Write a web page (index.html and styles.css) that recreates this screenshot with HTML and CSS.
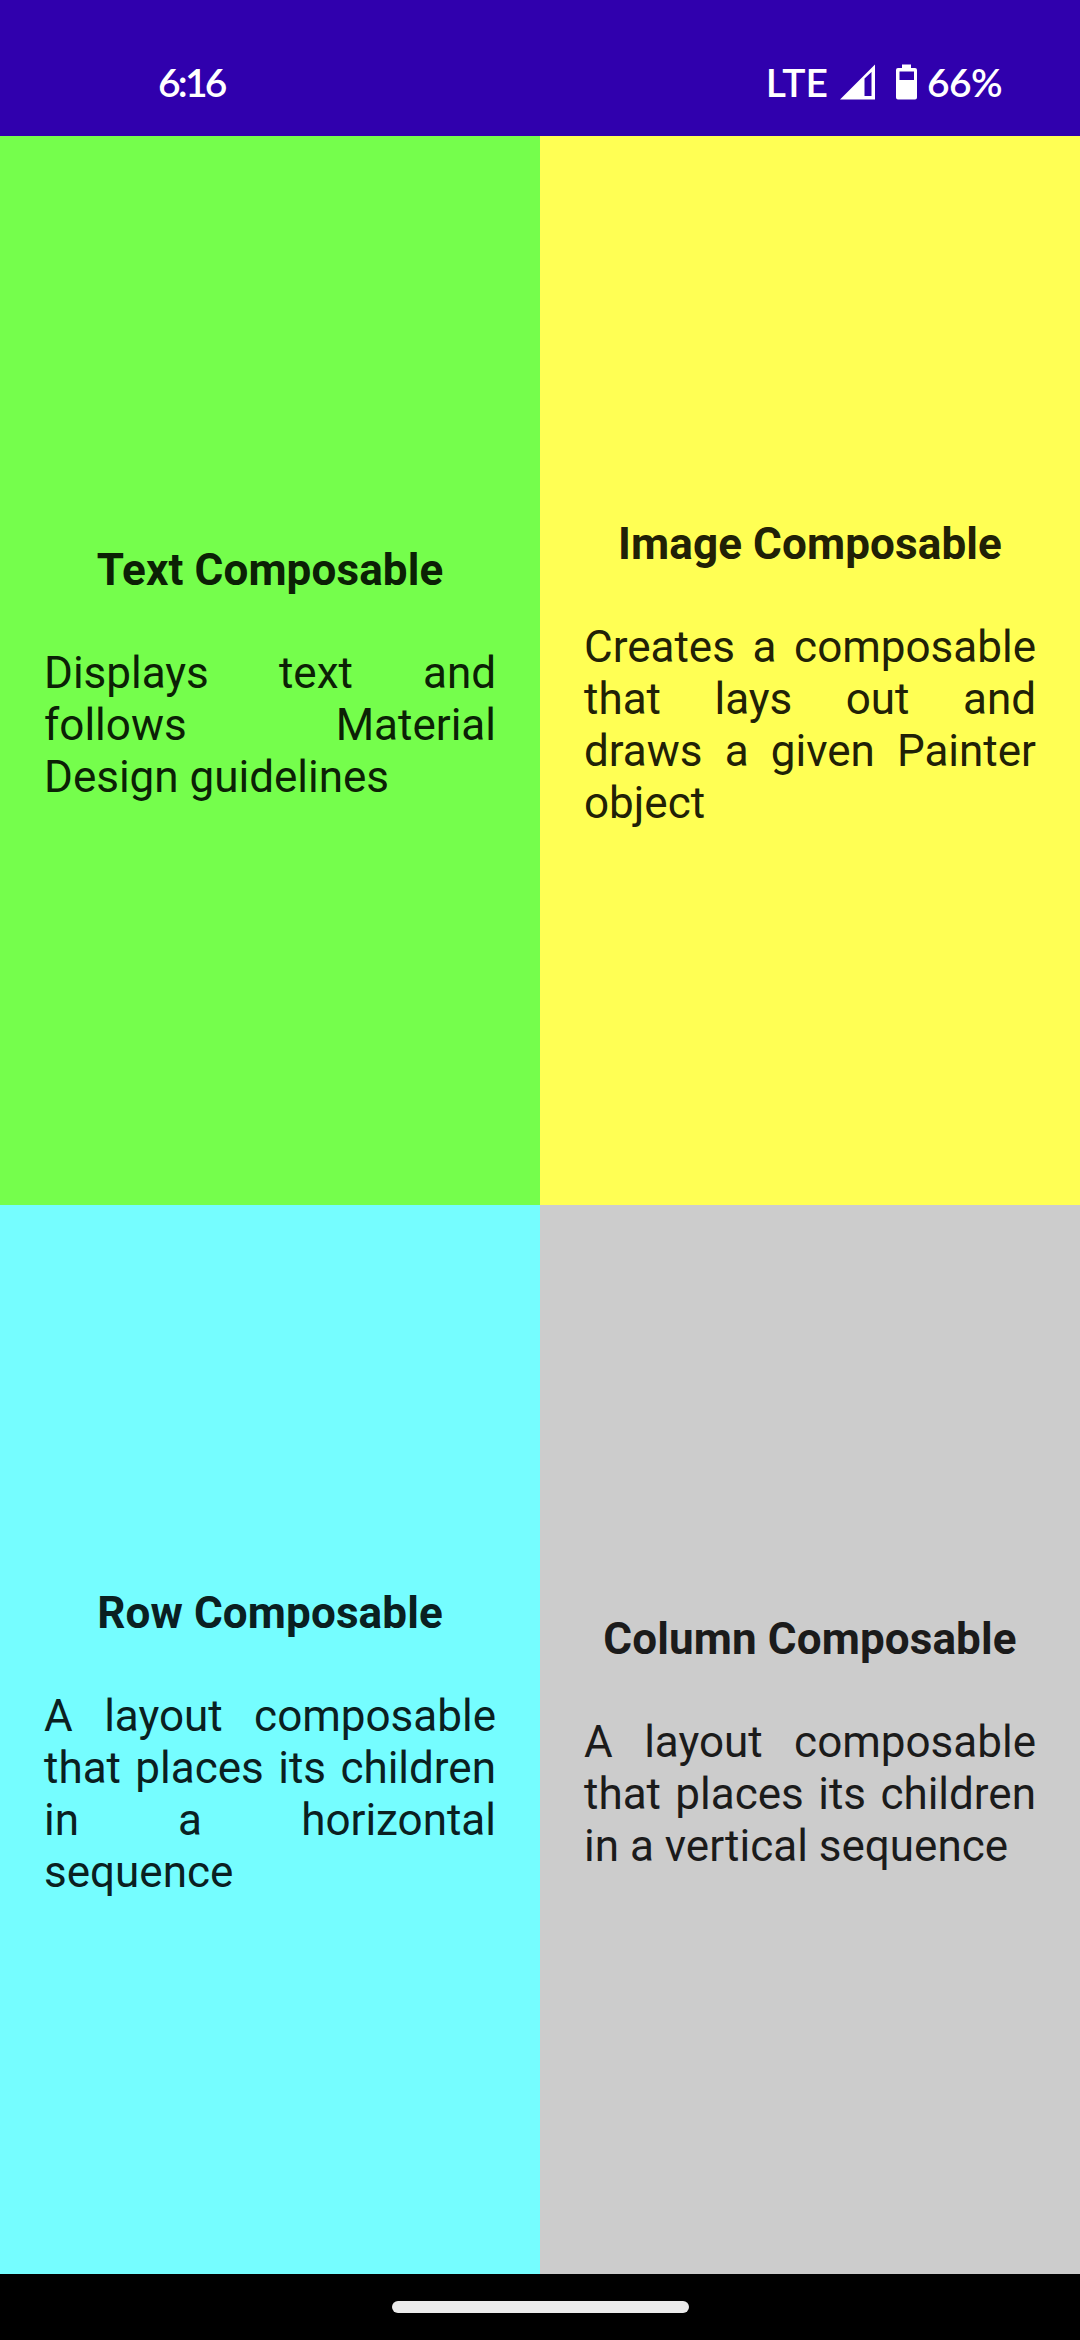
FILE: index.html
```html
<!DOCTYPE html>
<html lang="en">
<head>
<meta charset="utf-8">
<title>Compose Quadrant</title>
<link rel="stylesheet" href="styles.css">
</head>
<body>
<div class="screen">
  <header class="status-bar">
    <span class="clock">6:16</span>
    <div class="status-icons">
      <span class="network">LTE</span>
      <svg class="signal" width="36" height="36" viewBox="0 0 36 36"><path fill="#fff" fill-rule="evenodd" d="M0 35.500 35 .5v35zM24.500 14.500V32h7V8z"/></svg>
      <svg class="battery" width="21" height="36" viewBox="0 0 21 36"><path fill="#fff" fill-rule="evenodd" d="M6 .5h9V4h4a2 2 0 0 1 2 2v27.500a2 2 0 0 1-2 2H2a2 2 0 0 1-2-2V6a2 2 0 0 1 2-2h4zM3.500 7.500v8.500H18V7.500z"/></svg>
      <span class="level">66%</span>
    </div>
  </header>
  <main class="quadrants">
    <section class="card card-green">
      <h2 class="title">Text Composable</h2>
      <p class="description">Displays text and follows Material Design guidelines</p>
    </section>
    <section class="card card-yellow">
      <h2 class="title">Image Composable</h2>
      <p class="description">Creates a composable that lays out and draws a given Painter object</p>
    </section>
    <section class="card card-cyan">
      <h2 class="title">Row Composable</h2>
      <p class="description">A layout composable that places its children in a horizontal sequence</p>
    </section>
    <section class="card card-gray">
      <h2 class="title">Column Composable</h2>
      <p class="description">A layout composable that places its children in a vertical sequence</p>
    </section>
  </main>
  <footer class="nav-bar"><div class="handle"></div></footer>
</div>
</body>
</html>
```

FILE: styles.css
```css
* {
  box-sizing: border-box;
}

body {
  margin: 0;
  font-family: Roboto, sans-serif;
}

.screen {
  display: grid;
  grid-template-rows: 136px 1fr 66px;
  width: 1080px;
  height: 2340px;
}

.status-bar {
  display: flex;
  justify-content: space-between;
  align-items: center;
  padding: 28px 78px 0 158px;
  background: #3000ad;
  color: #fff;
  font-family: Lato, sans-serif;
  font-size: 39px;
  font-weight: 600;
  line-height: 48px;
}

.clock {
  letter-spacing: -2.8px;
}

.status-icons {
  display: flex;
  align-items: center;
}

.signal {
  margin-left: 12px;
}

.battery {
  margin: 0 10px 0 20px;
}

.level {
  letter-spacing: -0.6px;
}

.quadrants {
  display: grid;
  grid-template: 1fr 1fr / 1fr 1fr;
}

.card {
  display: flex;
  flex-direction: column;
  justify-content: center;
  padding: 44px;
  font-size: 44px;
  line-height: 52px;
}

.card-green {
  background: #75fe4c;
  color: #0b2105;
}

.card-yellow {
  background: #ffff54;
  color: #212106;
}

.card-cyan {
  background: #75fdff;
  color: #0a2021;
}

.card-gray {
  background: #ccc;
  color: #1b1b1b;
}

.title {
  margin: 0 0 44px;
  padding: 6px 0 1px;
  font-size: inherit;
  font-weight: 700;
  letter-spacing: 0.12px;
  text-align: center;
}

.description {
  margin: 0;
  padding: 6px 0 1px;
  text-align: justify;
}

.nav-bar {
  display: flex;
  justify-content: center;
  align-items: center;
  background: #000;
}

.handle {
  width: 297px;
  height: 12px;
  border-radius: 6px;
  background: #ebebeb;
}
```
